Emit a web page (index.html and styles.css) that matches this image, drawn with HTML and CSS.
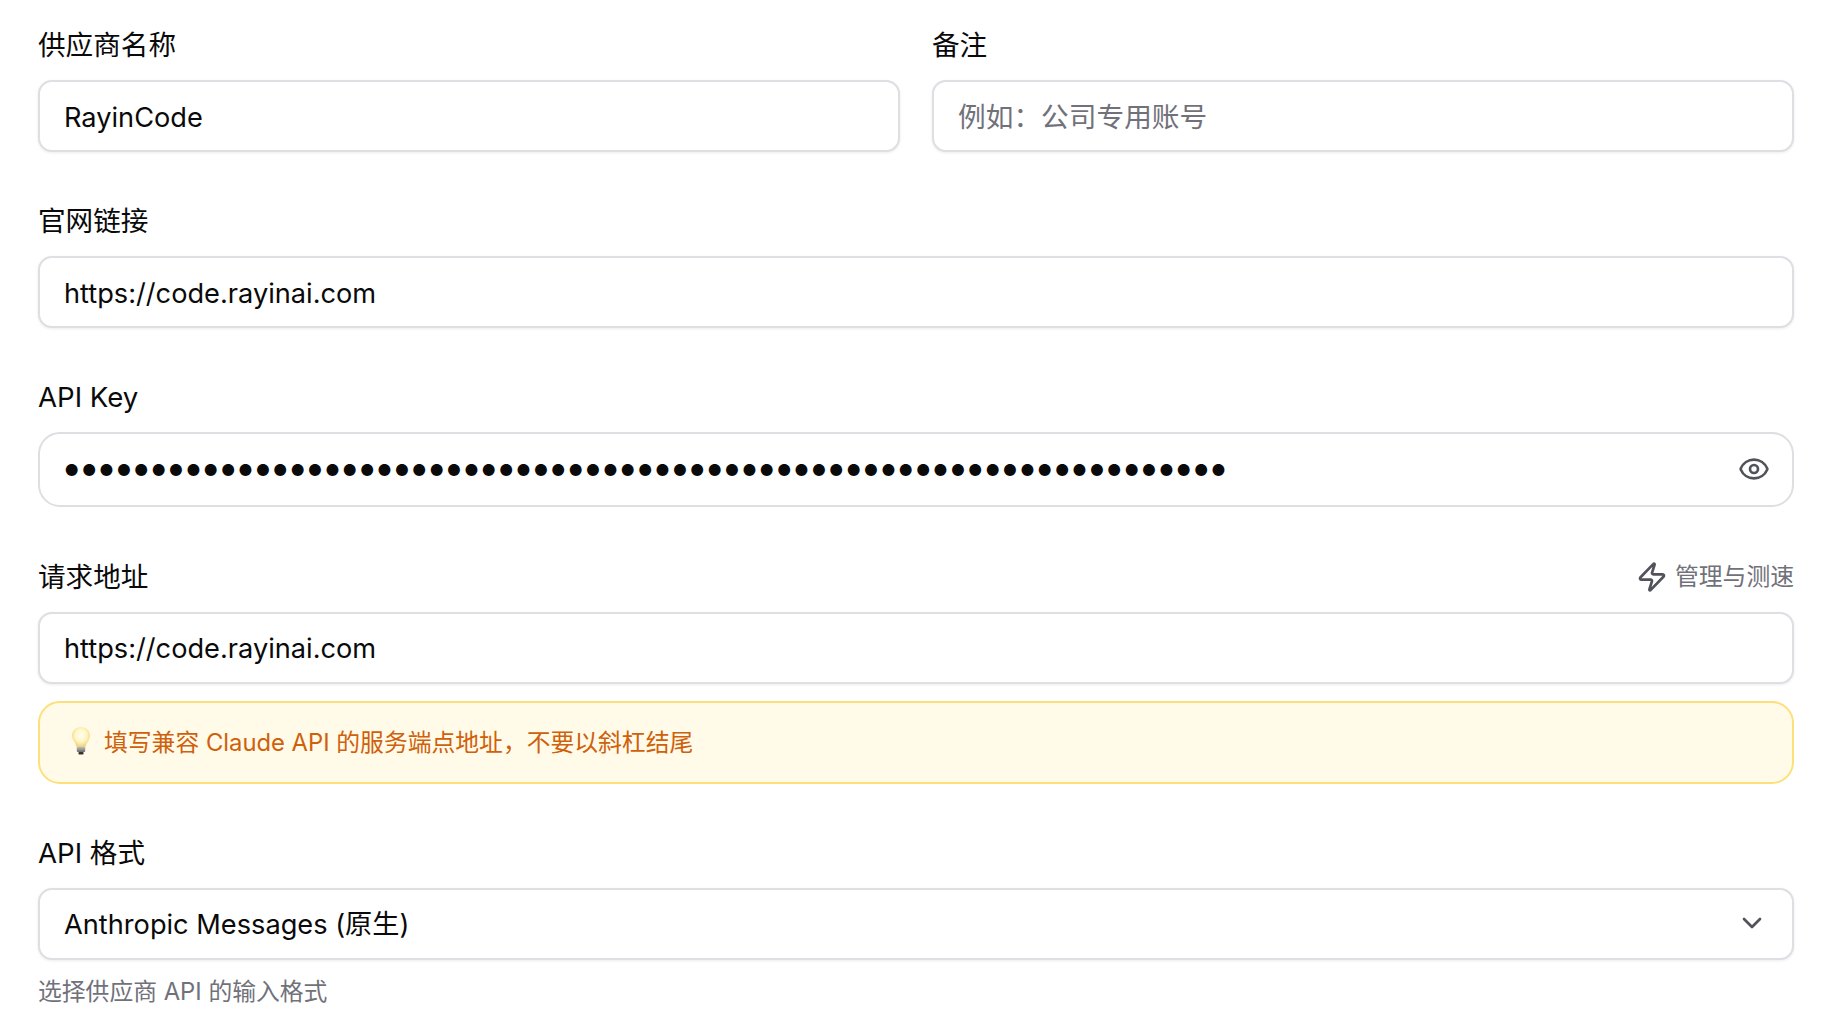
FILE: index.html
```html
<!DOCTYPE html>
<html lang="zh-CN">
<head>
    <meta charset="UTF-8">
    <meta name="viewport" content="width=device-width, initial-scale=1.0">
    <title>供应商设置</title>
    <link rel="stylesheet" href="styles.css">
</head>
<body>
    <form class="provider-form">
        <div class="form-row">
            <div class="form-group">
                <label class="field-label" for="providerName">供应商名称</label>
                <input class="field-input" type="text" id="providerName" value="RayinCode">
            </div>
            <div class="form-group">
                <label class="field-label" for="providerNote">备注</label>
                <input class="field-input" type="text" id="providerNote" placeholder="例如：公司专用账号">
            </div>
        </div>

        <div class="form-group">
            <label class="field-label" for="websiteUrl">官网链接</label>
            <input class="field-input" type="text" id="websiteUrl" value="https://code.rayinai.com">
        </div>

        <div class="form-group">
            <label class="field-label" for="apiKey">API Key</label>
            <div class="key-wrap">
                <input class="field-input key-input" type="password" id="apiKey" value="aaaaaaaaaaaaaaaaaaaaaaaaaaaaaaaaaaaaaaaaaaaaaaaaaaaaaaaaaaaaaaaaaaa">
                <svg class="eye-icon" viewBox="0 0 24 24" fill="none" stroke="currentColor" stroke-width="2" stroke-linecap="round" stroke-linejoin="round">
                    <path d="M2.06 12.35a1 1 0 0 1 0-.7 10.75 10.75 0 0 1 19.88 0 1 1 0 0 1 0 .7 10.75 10.75 0 0 1-19.88 0"/>
                    <circle cx="12" cy="12" r="3"/>
                </svg>
            </div>
        </div>

        <div class="form-group">
            <div class="label-row">
                <label class="field-label" for="requestUrl">请求地址</label>
                <span class="speed-link">
                    <svg class="zap-icon" viewBox="0 0 24 24" fill="none" stroke="currentColor" stroke-width="2" stroke-linecap="round" stroke-linejoin="round">
                        <path d="M4 14a1 1 0 0 1-.78-1.63l9.9-10.2a.5.5 0 0 1 .86.46l-1.92 6.02A1 1 0 0 0 13 10h7a1 1 0 0 1 .78 1.63l-9.9 10.2a.5.5 0 0 1-.86-.46l1.92-6.02A1 1 0 0 0 11 14z"/>
                    </svg>
                    管理与测速
                </span>
            </div>
            <input class="field-input" type="text" id="requestUrl" value="https://code.rayinai.com">
            <div class="url-tip">
                <svg class="bulb-icon" viewBox="0 0 20 30">
                    <defs>
                        <radialGradient id="bulbGlow" cx="50%" cy="42%" r="55%">
                            <stop offset="0%" stop-color="#fffef2"/>
                            <stop offset="60%" stop-color="#fff6c4"/>
                            <stop offset="100%" stop-color="#f4d67a"/>
                        </radialGradient>
                        <linearGradient id="bulbBase" x1="0" y1="0" x2="0" y2="1">
                            <stop offset="0%" stop-color="#c9c6b8"/>
                            <stop offset="100%" stop-color="#6b6b6b"/>
                        </linearGradient>
                    </defs>
                    <path d="M10 1C4.900 1 1 4.900 1 9.600c0 4.200 3.300 6.600 4.400 11.200h9.200C15.700 16.200 19 13.800 19 9.600 19 4.900 15.100 1 10 1z" fill="url(#bulbGlow)"/>
                    <rect x="5.800" y="20.500" width="8.400" height="5.500" rx="1" fill="url(#bulbBase)"/>
                    <rect x="7.400" y="26" width="5.200" height="2.600" rx="1" fill="#33332f"/>
                </svg>
                <span>填写兼容 Claude API 的服务端点地址，不要以斜杠结尾</span>
            </div>
        </div>

        <div class="form-group">
            <label class="field-label" for="apiFormat">API 格式</label>
            <div class="select-wrap">
                <select class="field-input format-select" id="apiFormat">
                    <option>Anthropic Messages (原生)</option>
                </select>
                <svg class="chevron-icon" viewBox="0 0 24 24" fill="none" stroke="currentColor" stroke-width="2" stroke-linecap="round" stroke-linejoin="round">
                    <path d="m6 9 6 6 6-6"/>
                </svg>
            </div>
            <p class="field-hint">选择供应商 API 的输入格式</p>
        </div>
    </form>
</body>
</html>
```

FILE: styles.css
```css
* {
    box-sizing: border-box;
}
body {
    margin: 0;
    background-color: #fff;
    color: #0a0a0a;
    font-family: Inter, "Noto Sans CJK SC", sans-serif;
}
.provider-form {
    padding: 25px 34px 0 38px;
}
.form-row {
    display: grid;
    grid-template-columns: 1fr 1fr;
    gap: 32px;
}
.form-group {
    margin-bottom: 49.2px;
}
.field-label {
    display: block;
    height: 40px;
    margin-bottom: 15px;
    font-size: 27.6px;
    line-height: 40px;
}
.field-input {
    display: block;
    width: 100%;
    height: 72px;
    padding: 2px 24px 0;
    background-color: #fff;
    border: 2px solid #dedee3;
    border-radius: 14px;
    box-shadow: 0 1px 3px rgba(0,0,0,0.08);
    color: #0a0a0a;
    font-family: inherit;
    font-size: 27.2px;
    outline: none;
}
.field-input::placeholder {
    color: #71717a;
    font-size: 27.7px;
    opacity: 1;
}
.key-wrap {
    position: relative;
}
.key-input {
    height: 75px;
    padding: 0 24px 6px 21px;
    border-radius: 22px;
    box-shadow: none;
    font-size: 38px;
    letter-spacing: -4px;
}
.eye-icon {
    position: absolute;
    top: 21px;
    right: 24px;
    width: 32px;
    height: 32px;
    color: #52525b;
}
.label-row {
    display: flex;
    justify-content: space-between;
    align-items: center;
    height: 40px;
    margin-bottom: 15px;
}
.label-row .field-label {
    margin-bottom: 0;
}
.speed-link {
    display: flex;
    align-items: center;
    gap: 7px;
    color: #71717a;
    font-size: 23.8px;
    line-height: 1;
}
.zap-icon {
    width: 32px;
    height: 32px;
    color: #52525b;
}
.url-tip {
    display: flex;
    align-items: center;
    gap: 13px;
    height: 83px;
    margin-top: 17px;
    padding: 0 31px 3px;
    background-color: #fffbe8;
    border: 2px solid #fde07a;
    border-radius: 22px;
    color: #cf600c;
    font-size: 23.8px;
}
.bulb-icon {
    width: 20px;
    height: 30px;
    flex-shrink: 0;
}
.select-wrap {
    position: relative;
}
.format-select {
    appearance: none;
}
.chevron-icon {
    position: absolute;
    top: 19px;
    right: 26px;
    width: 32px;
    height: 32px;
    color: #52525b;
}
.field-hint {
    margin: 15px 0 0;
    color: #71717a;
    font-size: 23.8px;
    line-height: 34px;
}
```
